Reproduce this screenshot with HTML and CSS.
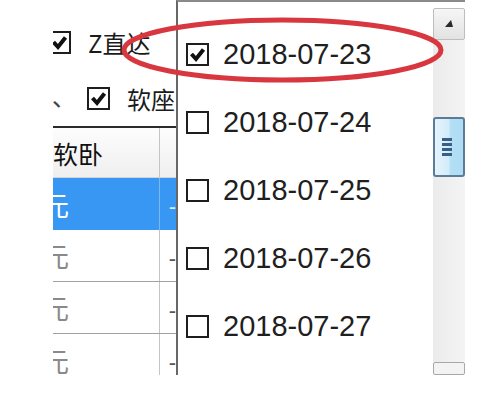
FILE: index.html
```html
<!DOCTYPE html>
<html lang="zh-CN">
<head>
  <meta charset="UTF-8">
  <title>日期选择</title>
  <link rel="stylesheet" href="styles.css">
</head>
<body>
  <div class="shot">
    <div class="form">
      <div class="opt opt-first">
        <span class="box"><svg viewBox="0 0 19 19"><path d="M3.5 9 L8 14 L15.5 4.5"/></svg></span>
        <span class="opt-label">Z直达</span>
      </div>
      <div class="opt opt-second">
        <span class="mark">、</span>
        <span class="box"><svg viewBox="0 0 19 19"><path d="M3.5 9 L8 14 L15.5 4.5"/></svg></span>
        <span class="opt-label">软座</span>
      </div>
      <div class="grid">
        <div class="row head"><div class="cell name">软卧</div><div class="cell"></div></div>
        <div class="row sel"><div class="cell name"><span class="price">元</span></div><div class="cell tick">-</div></div>
        <div class="row line"><div class="cell name"><span class="price">元</span></div><div class="cell tick">-</div></div>
        <div class="row line"><div class="cell name"><span class="price">元</span></div><div class="cell tick">-</div></div>
        <div class="row"><div class="cell name"><span class="price">元</span></div><div class="cell tick">-</div></div>
      </div>
    </div>

    <div class="popup">
      <ul class="dates">
        <li><span class="box"><svg viewBox="0 0 19 19"><path d="M3.5 9 L8 14 L15.5 4.5"/></svg></span>2018-07-23</li>
        <li><span class="box"></span>2018-07-24</li>
        <li><span class="box"></span>2018-07-25</li>
        <li><span class="box"></span>2018-07-26</li>
        <li><span class="box"></span>2018-07-27</li>
      </ul>
      <div class="scroll">
        <div class="btn up"><svg viewBox="0 0 30 30"><polygon points="11,18 19,18 17,11"/></svg></div>
        <div class="track">
          <div class="thumb">
            <div class="grip"><i></i><i></i><i></i><i></i></div>
          </div>
        </div>
        <div class="btn down"></div>
      </div>
    </div>

    <svg class="note" viewBox="0 0 412 375">
      <ellipse cx="229.5" cy="50" rx="158.5" ry="30"/>
    </svg>
  </div>
</body>
</html>
```

FILE: styles.css
```css
body {
  margin: 0;
  background: #fff;
  font-family: "Noto Sans CJK SC", "Liberation Sans", sans-serif;
}

.shot {
  position: relative;
  display: flex;
  width: 412px;
  height: 375px;
  margin-left: 53px;
  overflow: hidden;
  background: #fff;
}

/* left side: the form behind the popup */

.form {
  width: 123px;
  flex: none;
  overflow: hidden;
  padding-top: 14px;
}

.opt {
  display: flex;
  align-items: center;
  height: 56px;
  white-space: nowrap;
  font-size: 24px;
  color: #1b1b1b;
}

.opt-first .box {
  margin-left: -5px;
}

.opt-label {
  margin-left: 17px;
}

.mark {
  width: 35px;
  flex: none;
  margin-left: -1px;
  margin-top: -6px;
  color: #444;
}

.box {
  display: inline-flex;
  flex: none;
  width: 23px;
  height: 23px;
  box-sizing: border-box;
  border: 2px solid #1e1e1e;
  background: #fff;
}

.box svg {
  width: 100%;
  height: 100%;
}

.box path {
  fill: none;
  stroke: #111;
  stroke-width: 4;
  stroke-linejoin: miter;
}

.grid {
  border-top: 2px solid #2b2b2b;
}

.row {
  display: flex;
  height: 52px;
  box-sizing: border-box;
}

.row.head {
  height: 50px;
  border-bottom: 1px solid #d4d4d4;
  background: linear-gradient(#fdfdfd, #efefef);
}

.row.line {
  border-bottom: 1px solid #a2a2a2;
}

.row.sel {
  background: #3797f3;
}

.cell {
  display: flex;
  align-items: center;
  white-space: nowrap;
}

.cell.name {
  width: 106px;
  border-right: 1px solid #c4c4c4;
  font-size: 25px;
  color: #111;
}

.row.sel .cell.name {
  border-right-color: #7fb6ec;
}

.price {
  margin-left: -11px;
  font-size: 27px;
  color: #8a8a8a;
}

.row.sel .price {
  color: #fff;
}

.tick {
  padding-left: 9px;
  padding-top: 6px;
  font-family: "Liberation Sans", sans-serif;
  font-size: 22px;
  color: #555;
}

.row.sel .tick {
  color: #d6ecff;
}

/* the dropdown */

.popup {
  flex: 1;
  display: flex;
  border-left: 2px solid #676767;
  border-top: 2px solid #8a8a8a;
  background: #fff;
}

.dates {
  flex: 1;
  list-style: none;
  margin: 0;
  padding: 18px 0 0 8px;
}

.dates li {
  display: flex;
  align-items: center;
  height: 68px;
  font-family: "Liberation Sans", sans-serif;
  font-size: 29px;
  color: #1f1f1f;
}

.dates .box {
  margin-right: 14px;
}

.scroll {
  width: 32px;
  margin-top: 6px;
  display: flex;
  flex-direction: column;
}

.btn {
  box-sizing: border-box;
  border: 1px solid #bdbdbd;
  border-radius: 2px;
  background: linear-gradient(#f6f6f6, #e2e2e2);
}

.btn.up {
  height: 32px;
}

.btn.up svg {
  width: 100%;
  height: 100%;
}

.btn.up polygon {
  fill: #2a2a2a;
}

.btn.down {
  height: 13px;
  flex: none;
  border-color: #a8a8a8;
  background: #f3f3f3;
}

.track {
  flex: 1;
  background: linear-gradient(90deg, #ebebeb, #f4f4f4);
  padding-top: 77px;
}

.thumb {
  height: 60px;
  box-sizing: border-box;
  border: 2px solid #5c7b98;
  border-radius: 3px;
  background: linear-gradient(90deg, #e6f4fc 0%, #d2ecfa 50%, #b4dff5 55%, #aedcf4 100%);
  display: flex;
  align-items: center;
  justify-content: center;
}

.grip {
  display: flex;
  flex-direction: column;
  gap: 2px;
  margin-left: -4px;
}

.grip i {
  display: block;
  width: 10px;
  height: 3px;
  background: #3a5f86;
}

/* red hand-drawn mark over the selected date */

.note {
  position: absolute;
  left: 0;
  top: 0;
  width: 412px;
  height: 375px;
  pointer-events: none;
}

.note ellipse {
  fill: none;
  stroke: #d8373f;
  stroke-width: 5;
}
```
